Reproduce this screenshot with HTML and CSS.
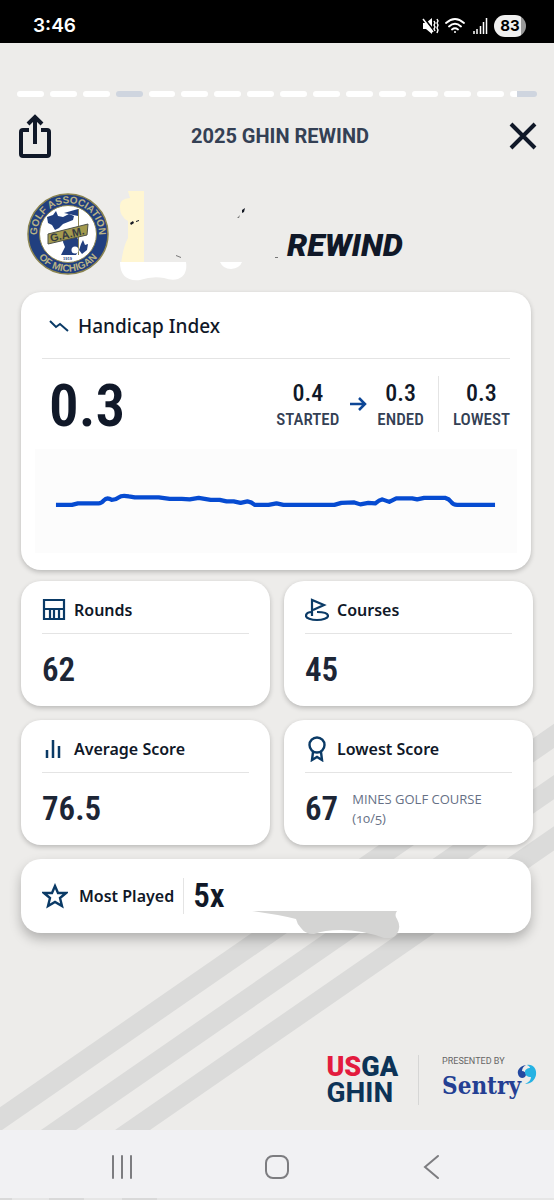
FILE: index.html
```
<!DOCTYPE html>
<html lang="en">
<head>
  <meta charset="UTF-8">
  <meta name="viewport" content="width=device-width, initial-scale=1.0">
  <title>2025 GHIN Rewind</title>
  <link rel="stylesheet" href="styles.css">
</head>
<body>
  <!-- Phone status bar -->
  <div class="status-bar">
    <span class="clock">3:46</span>
    <div class="status-icons">
      <svg width="17" height="18" viewBox="0 0 17 18" fill="none" stroke="#fff" stroke-width="1.5">
        <path d="M1 6h3l6-5v16l-6-5H1z" fill="#fff" stroke="none"/>
        <path d="M2 1l10 13" stroke="#000" stroke-width="2"/>
        <path d="M1 2l10 13"/>
        <path d="M12 4l1 2-1 2 1 2-1 2 1 2M15 2l1 2-1 2 1 2-1 3 1 2-1 3" stroke-width="1.400"/>
      </svg>
      <svg width="20" height="16" viewBox="0 0 20 16" fill="none" stroke="#fff" stroke-width="1.8" stroke-linecap="round">
        <path d="M1 5Q10-3 19 5M4 8.500Q10 3 16 8.500M7 11.500Q10 9 13 11.500"/>
        <circle cx="10" cy="14" r="1" fill="#fff" stroke="none"/>
      </svg>
      <svg class="signal" width="15" height="16" viewBox="0 0 15 16" stroke="#fff" stroke-width="1.5">
        <path d="M1 16v-3M4 16v-5M7.500 16V8M10.500 16V4M13.500 16V0"/>
      </svg>
      <span class="battery">83</span>
    </div>
  </div>

  <main class="story">
    <!-- Diagonal background stripes -->
    <svg class="stripes" viewBox="0 0 554 410" fill="#dbdbda">
      <path d="M-33 410L561-1H596L2 410zM41 410L635-1H670L76 410zM115 410L709-1H744L150 410z"/>
    </svg>

    <div class="progress">
      <span></span><span></span><span></span><span class="off"></span>
      <span></span><span></span><span></span><span></span>
      <span></span><span></span><span></span><span></span>
      <span></span><span></span><span></span><span class="partial"></span>
    </div>

    <header class="top">
      <button class="icon-button" aria-label="Share">
        <svg width="32" height="44" viewBox="0 0 32 44" fill="none" stroke="#101828" stroke-width="4">
          <path d="M10 16H4q-2 0-2 2v22q0 2 2 2h24q2 0 2-2V18q0-2-2-2h-6" stroke-linejoin="round"/>
          <path d="M16 30V3M9 10l7-7 7 7"/>
        </svg>
      </button>
      <h1>2025 GHIN REWIND</h1>
      <button class="icon-button" aria-label="Close">
        <svg width="28" height="28" viewBox="0 0 28 28" stroke="#101828" stroke-width="4">
          <path d="M2 2l24 24M26 2L2 26"/>
        </svg>
      </button>
    </header>

    <section class="player">
      <svg class="club-logo" width="82" height="82" viewBox="0 0 82 82">
        <defs>
          <path id="arcTop" d="M13.200 55a31 31 0 1 1 55.600 0"/>
          <path id="arcBottom" d="M3.500 41a37.500 37.500 0 0 0 75 0"/>
        </defs>
        <circle cx="41" cy="41" r="40" fill="#213f7f" stroke="#8b8450" stroke-width="1.5"/>
        <circle cx="41" cy="41" r="28.500" fill="#fff" stroke="#8b8450"/>
        <text class="club-text"><textPath href="#arcTop" startOffset="50%" text-anchor="middle">GOLF ASSOCIATION</textPath></text>
        <text class="club-text"><textPath href="#arcBottom" startOffset="50%" text-anchor="middle">OF MICHIGAN</textPath></text>
        <path fill="#213f7f" d="M20 24l6-2 3-4 2 5 5 1 6-3 5 2-1 4-5 2-5 2-4 4-4 2-3-5-4-2zM37 44l5-2 8 2 2 5-1 4 1 4-3 5H34l4-8-2-5zM54 51l2-4 2 5 3-1-1 6-5 4-3-4z"/>
        <path fill="#213f7f" d="M37 20l14-4v7z"/>
        <path d="M51.500 16v46" stroke="#8b8450"/>
        <circle cx="48" cy="57" r="3.500" fill="#fff"/>
        <path d="M21 41l40-10-1 11-39 9z" fill="#a39a4e" stroke="#4d5148"/>
        <text class="club-initials" x="24" y="49" transform="rotate(-13 24 49)">G.A.M.</text>
        <text class="club-year" x="36" y="67">1919</text>
      </svg>
      <svg class="smudge" width="170" height="92" viewBox="0 0 170 92">
        <path fill="#fff6d2" d="M9 0h16v73H2q2-17 7-26V30Q0 25 1 14q0-6 10-7z"/>
        <path fill="#fff" d="M1 71h66q2 13-8 17-6 2-14-1-12-2-24 2Q1 91 1 71zM101 71h22q-2 6-11 7-8 0-11-7z"/>
        <path fill="#141823" d="M11 32l3-2 1 2-3 2zM17 30l3-1v1l-3 1zM123 19l3-2-1 4-2 1z"/>
        <path fill="#777" d="M57 64l5 2v1l-5-2zM156 66h3v1h-3zM118 27l3-3-1 3z"/>
      </svg>
      <h2>REWIND</h2>
    </section>

    <section class="card handicap">
      <div class="handicap-title">
        <svg width="20" height="12" viewBox="0 0 20 12" fill="none" stroke="#0a3a66" stroke-width="2">
          <path d="M1 1l6 6 4-3 8 7"/>
        </svg>
        <h3>Handicap Index</h3>
      </div>
      <div class="handicap-stats">
        <strong class="index">0.3</strong>
        <div class="stat"><b>0.4</b><span>STARTED</span></div>
        <svg class="arrow" width="18" height="14" viewBox="0 0 18 14" fill="none" stroke="#0d4696" stroke-width="2.5">
          <path d="M1 7h15M10 1l6 6-6 6"/>
        </svg>
        <div class="stat"><b>0.3</b><span>ENDED</span></div>
        <div class="stat lowest"><b>0.3</b><span>LOWEST</span></div>
      </div>
      <svg class="chart" viewBox="35 449 483 104" fill="none">
        <path stroke="#064bd1" stroke-width="4.200" stroke-linejoin="round" d="M56 505H72L78 503.500H98Q101 504 104 500.500T112 500Q116 500 119 497.500T129 496.500L135 497.500H159L170 499H182L190 499.500 199 498 211 500H220L227 501.500H234L241 503 248 501.500Q252 502 255 505H269L277 503.500 284 505H335L342 503 355 502.500 361 504.500 369 503 376 503.500Q380 500 383 499.500L390 502 397 498.500H413L418 499.500 425 498H446Q450 499 452 502T458 505H496"/>
      </svg>
    </section>

    <section class="grid">
      <article class="card tile">
        <div class="tile-title">
          <svg width="24" height="24" viewBox="0 0 24 24" fill="none" stroke="#0a3a66" stroke-width="2.2">
            <path d="M2 2h20v19H2zM2 11h20M8 11v10M12 11v10M17 11v10"/>
          </svg>
          <h3>Rounds</h3>
        </div>
        <div class="tile-value"><strong>62</strong></div>
      </article>
      <article class="card tile">
        <div class="tile-title">
          <svg width="24" height="24" viewBox="0 0 24 24" fill="none" stroke="#0a3a66" stroke-width="2.2">
            <path d="M7 18V2l12 5-11 5"/>
            <path d="M7 14c-4 0-6 1-6 4 0 2 5 4 11 4s11-2 11-4c0-3-5-4-11-4"/>
          </svg>
          <h3>Courses</h3>
        </div>
        <div class="tile-value"><strong>45</strong></div>
      </article>
      <article class="card tile">
        <div class="tile-title">
          <svg width="24" height="24" viewBox="0 0 24 24" stroke="#0a3a66" stroke-width="2.500">
            <path d="M5 21v-8M11 21V3M17 21V9"/>
          </svg>
          <h3>Average Score</h3>
        </div>
        <div class="tile-value"><strong>76.5</strong></div>
      </article>
      <article class="card tile">
        <div class="tile-title">
          <svg width="24" height="26" viewBox="0 0 24 26" fill="none" stroke="#0a3a66" stroke-width="2.4">
            <circle cx="12" cy="9" r="7.500"/>
            <path d="M8 16l-1 8 5-3 5 3-1-8"/>
          </svg>
          <h3>Lowest Score</h3>
        </div>
        <div class="tile-value"><strong>67</strong><p>MINES GOLF COURSE<br>(10/5)</p></div>
      </article>
    </section>

    <section class="card most-played">
      <svg width="26" height="26" viewBox="0 0 26 26" fill="none" stroke="#0a3a66" stroke-width="2.4">
        <path d="M13 3l3 7h8l-6 5 2 8-7-4-7 4 2-8-6-5h8z"/>
      </svg>
      <h3>Most Played</h3>
      <strong>5x</strong>
      <svg class="blot" width="148" height="27" viewBox="0 0 148 27">
        <path fill="#d4d4d3" d="M0 0h145q-3 4 0 8 5 9-1 16-3 4-12 3-22-8-43-8-17 0-27 4-9 0-13-6-4-4-5-9Q28 4 0 0z"/>
      </svg>
    </section>

    <footer class="sponsors">
      <div class="usga">
        <span><em>US</em>GA</span>
        <span class="ghin">GHIN</span>
      </div>
      <div class="presented">
        <small>PRESENTED BY</small>
        <span class="sentry">Sentry</span>
        <svg class="sentry-mark" width="20" height="22" viewBox="0 0 20 22">
          <path fill="#2449a0" d="M9 1C3 2 0 6 1 10c1 5 7 5 8 1 0-3-2-4-4-4 0-3 2-5 4-6z"/>
          <path fill="#26b2e3" d="M10 1c6-1 10 4 9 10-1 5-5 9-11 9 4-2 6-4 6-7-4 0-6-2-6-5s3-4 5-4c0-1-1-2-3-3z"/>
        </svg>
      </div>
    </footer>
  </main>

  <!-- Android navigation -->
  <nav class="phone-nav">
    <button aria-label="Recent apps">
      <svg width="24" height="26" viewBox="0 0 24 26" stroke="#7d7d80" stroke-width="2" stroke-linecap="round"><path d="M2 2v22M11 2v22M20 2v22"/></svg>
    </button>
    <button aria-label="Home">
      <svg width="24" height="26" viewBox="0 0 24 26" fill="none" stroke="#7d7d80" stroke-width="2"><rect x="1" y="2" width="22" height="22" rx="7"/></svg>
    </button>
    <button aria-label="Back">
      <svg width="24" height="26" viewBox="0 0 24 26" fill="none" stroke="#7d7d80" stroke-width="2" stroke-linecap="round"><path d="M18 2L5 13l13 11"/></svg>
    </button>
  </nav>
</body>
</html>
```
FILE: styles.css
```
/* Reset default styles */
* {
    margin: 0;
    padding: 0;
    box-sizing: border-box;
}

body {
    min-height: 100vh;
    display: flex;
    flex-direction: column;
    font-family: 'Noto Sans', sans-serif;
    background: #edecea;
    color: #101828;
}

svg {
    display: block;
    flex-shrink: 0;
}

button {
    border: none;
    background: none;
    cursor: pointer;
}

/* Status bar */
.status-bar {
    height: 43px;
    padding: 8px 28px 0 33px;
    display: flex;
    justify-content: space-between;
    align-items: center;
    background: #000;
    color: #fff;
}

.clock {
    font: 600 19px 'Inter', sans-serif;
}

.status-icons {
    display: flex;
    align-items: center;
    gap: 6px;
}

.signal {
    margin-left: 2px;
}

.battery {
    width: 32px;
    border-radius: 11px;
    background: linear-gradient(90deg, #f0f0f0 84%, #999 84%);
    color: #000;
    font: 700 15px/22px 'Inter', sans-serif;
    text-align: center;
}

/* Story page */
.story {
    position: relative;
    z-index: 0;
    flex: 1;
    display: flex;
    flex-direction: column;
    padding: 48px 21px 25px;
    overflow: hidden;
}

.stripes {
    position: absolute;
    left: 0;
    bottom: 0;
    width: 100%;
    z-index: -1;
}

.progress {
    display: flex;
    gap: 6px;
    margin: 0 -4px;
}

.progress span {
    flex: 1;
    height: 6px;
    border-radius: 3px;
    background: #fff;
}

.progress .off {
    background: #cfd5df;
}

.progress .partial {
    background: linear-gradient(90deg, #fff 26%, #cfd5df 26%);
}

.top {
    display: flex;
    justify-content: space-between;
    align-items: center;
    height: 44px;
    margin: 17px -4px 0 -2px;
}

.icon-button {
    display: flex;
}

.top h1 {
    font: 700 20px/28px 'Roboto', sans-serif;
    color: #344054;
}

.player {
    display: flex;
    align-items: flex-start;
    height: 92px;
    margin: 33px 0 9px 6px;
}

.club-logo {
    margin-top: 2px;
}

.club-text {
    fill: #b9b385;
    font: 700 10px 'Liberation Sans', sans-serif;
}

.club-initials {
    fill: #343b42;
    font: 700 11px 'Liberation Sans', sans-serif;
}

.club-year {
    fill: #213f7f;
    font: 700 4px 'Liberation Sans', sans-serif;
}

.smudge {
    margin: 0 -2px 0 10px;
}

.player h2 {
    margin-top: 34px;
    font: italic 900 32px/40px 'Roboto', sans-serif;
}

/* Cards */
.card {
    border-radius: 20px;
    background: #fff;
    box-shadow: 0 2px 5px rgba(0, 0, 0, 0.22);
}

.handicap {
    margin-right: 2px;
    padding: 13px 21px 17px;
}

.handicap-title {
    display: flex;
    align-items: center;
    gap: 9px;
    padding: 0 7px 11px;
    height: 54px;
    border-bottom: 1px solid #e4e4e4;
}

.handicap-title h3 {
    font-size: 19px;
    line-height: 28px;
    font-weight: 500;
}

.handicap-stats {
    display: flex;
    align-items: center;
    height: 90px;
    font-family: 'Roboto Condensed', 'Roboto', sans-serif;
}

.index {
    margin: 4px auto 0 7px;
    font-size: 59px;
    line-height: 64px;
    font-weight: 600;
}

.stat {
    display: flex;
    flex-direction: column;
    align-items: center;
    padding-top: 4px;
}

.stat b {
    font-size: 24px;
    line-height: 26px;
    font-weight: 500;
}

.stat span {
    font-size: 17px;
    line-height: 26px;
    font-weight: 500;
    color: #344054;
}

.arrow {
    margin: 0 10px;
}

.lowest {
    margin-left: 14px;
    padding-left: 14px;
    border-left: 1px solid #e4e4e4;
}

.chart {
    width: calc(100% + 14px);
    margin: 0 -7px;
    background: #fcfcfc;
}

.grid {
    display: grid;
    grid-template-columns: 1fr 1fr;
    gap: 14px;
    margin: 11px 0 14px;
}

.tile {
    padding: 16px 21px 0;
}

.tile-title {
    display: flex;
    align-items: center;
    gap: 8px;
    height: 37px;
    padding-bottom: 10px;
    border-bottom: 1px solid #e4e4e4;
}

.tile-title h3,
.most-played h3 {
    font-size: 16px;
    line-height: 24px;
    font-weight: 600;
}

.tile-value {
    display: flex;
    align-items: center;
    gap: 14px;
    height: 72px;
    color: #1d2636;
}

.tile-value strong,
.most-played strong {
    font: 600 33px/36px 'Roboto Condensed', 'Roboto', sans-serif;
}

.tile-value p {
    color: #667085;
    font: 400 13px/19px 'Open Sans', sans-serif;
    font-variant-numeric: oldstyle-nums;
}

.most-played {
    display: flex;
    align-items: center;
    height: 74px;
    margin-right: 2px;
    padding: 0 21px;
    box-shadow: 0 6px 12px rgba(0, 0, 0, 0.25);
}

.most-played h3 {
    margin-left: 11px;
}

.most-played strong {
    margin-left: 9px;
    padding-left: 9px;
    border-left: 1px solid #e4e4e4;
}

.blot {
    align-self: flex-end;
    margin: 0 0 -5px 27px;
}

/* Sponsors */
.sponsors {
    display: flex;
    justify-content: flex-end;
    align-items: center;
    margin-top: auto;
    margin-right: -4px;
}

.usga {
    padding-right: 20px;
    border-right: 1px solid #d6d6d5;
    color: #0c3357;
    font: 900 27px/25px 'Roboto', sans-serif;
}

.usga span {
    display: block;
}

.usga em {
    font-style: normal;
    color: #e31b3e;
}

.usga .ghin {
    font: 700 28px/25px 'Roboto', sans-serif;
}

.presented {
    position: relative;
    padding: 0 16px 0 23px;
}

.presented small {
    display: block;
    font: 400 9px/12px 'Roboto', sans-serif;
    color: #666;
}

.sentry {
    display: block;
    font: 700 24px/38px 'DejaVu Serif Condensed', 'DejaVu Serif', serif;
    color: #243f93;
}

.sentry-mark {
    position: absolute;
    right: 0;
    top: 9px;
}

/* Phone navigation */
.phone-nav {
    display: flex;
    justify-content: space-evenly;
    align-items: center;
    height: 70px;
    padding-top: 4px;
    background: linear-gradient(90deg, #d9d9d9 12px, #e6e6e6 12px 49px, #d9d9d9 49px 84px, #e6e6e6 84px 122px, #d9d9d9 122px 157px, #e6e6e6 157px) 0 100% / 100% 2px no-repeat #f1f1f3;
}

.phone-nav button {
    padding: 10px 20px;
}
```
